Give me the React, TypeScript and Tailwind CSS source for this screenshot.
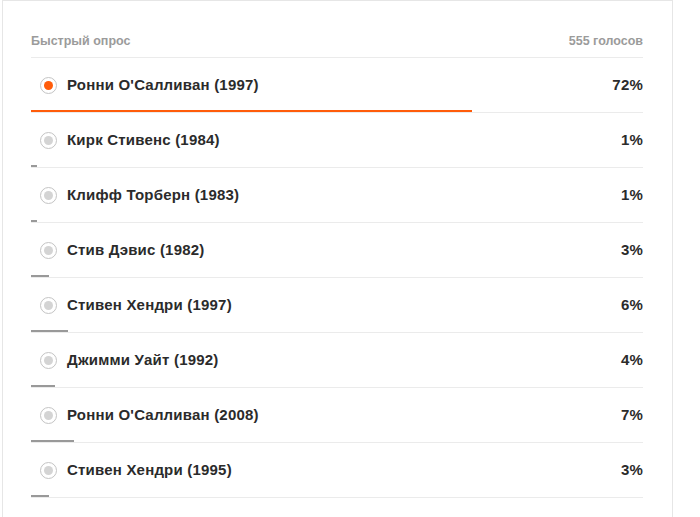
const options = [
  { name: "Ронни О'Салливан (1997)", pct: 72, selected: true },
  { name: "Кирк Стивенс (1984)", pct: 1 },
  { name: "Клифф Торберн (1983)", pct: 1 },
  { name: "Стив Дэвис (1982)", pct: 3 },
  { name: "Стивен Хендри (1997)", pct: 6 },
  { name: "Джимми Уайт (1992)", pct: 4 },
  { name: "Ронни О'Салливан (2008)", pct: 7 },
  { name: "Стивен Хендри (1995)", pct: 3 },
];

function Radio({ selected }: { selected?: boolean }) {
  return (
    <span className="flex h-[17px] w-[17px] shrink-0 items-center justify-center rounded-full border border-[#c4c4c4] bg-white">
      <span
        className={
          selected
            ? "h-[9px] w-[9px] rounded-full bg-[#ff5c0a]"
            : "h-[9px] w-[9px] rounded-full bg-[#d4d4d4]"
        }
      />
    </span>
  );
}

export default function App() {
  return (
    <div className="h-[517px] w-[700px] overflow-hidden bg-white font-['Liberation_Sans',Arial,sans-serif]">
      <div className="ml-[2px] h-[530px] w-[671px] border-x border-t border-[#e6e6e6] pl-[28px] pr-[29px] pt-[32px]">
        {/* Шапка */}
        <div className="flex h-[25px] items-start justify-between border-b border-[#ebebeb] text-[12.5px] font-bold leading-[16px] text-[#9b9b9b]">
          <span>Быстрый опрос</span>
          <span>555 голосов</span>
        </div>

        {/* Варианты */}
        {options.map((o, i) => (
          <div key={i} className="flex h-[55px] flex-col border-b border-[#ebebeb]">
            <div className="flex flex-1 items-center justify-between pl-[9px] pt-[2px] text-[15px] font-bold tracking-[0.2px] text-[#2b2b2b]">
              <div className="flex items-center gap-[10px]">
                <Radio selected={o.selected} />
                <span>{o.name}</span>
              </div>
              <span>{o.pct}%</span>
            </div>
            <div
              className={o.selected ? "h-[2px] bg-[#ff5c0a]" : "h-[2px] bg-[#999999]"}
              style={{ width: `${o.pct}%` }}
            />
          </div>
        ))}
      </div>
    </div>
  );
}
